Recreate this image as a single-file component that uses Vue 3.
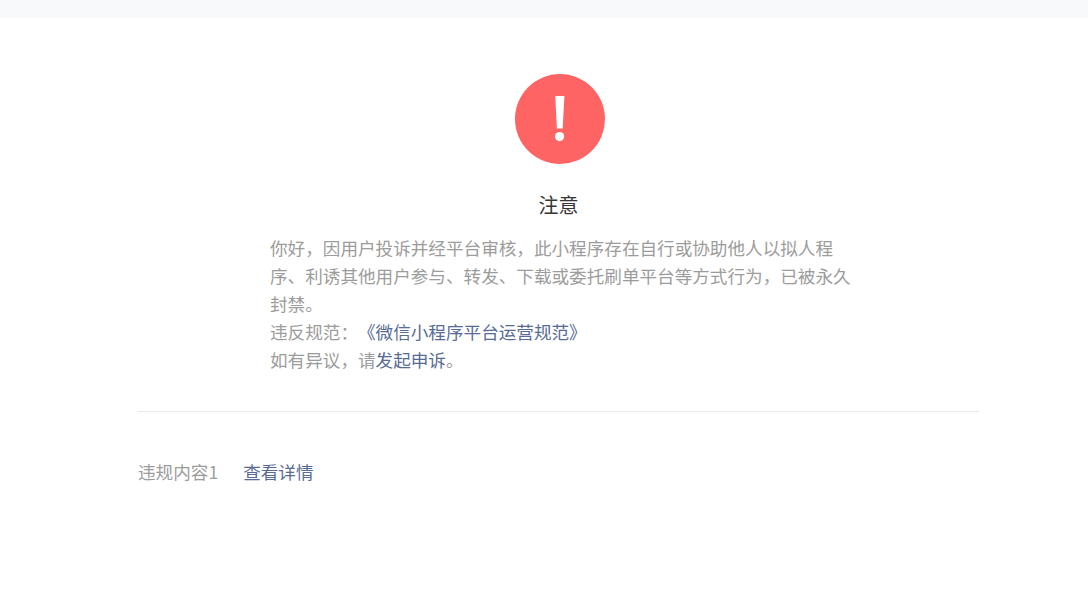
<template>
  <div class="page">
    <div class="top-band"></div>
    <main class="content">
      <section class="notice">
        <svg class="warn-icon" width="90" height="90" viewBox="0 0 90 90">
          <circle cx="45" cy="45" r="45" fill="#ff6464"></circle>
          <path d="M40.2 22h9.2l-1.7 32.5h-5.8z" fill="#fff"></path>
          <circle cx="44.6" cy="62.6" r="4.6" fill="#fff"></circle>
        </svg>
        <h2 class="notice-title">注意</h2>
        <div class="notice-body">
          <p class="body-line">你好，因用户投诉并经平台审核，此小程序存在自行或协助他人以拟人程序、利诱其他用户参与、转发、下载或委托刷单平台等方式行为，已被永久封禁。</p>
          <p class="body-line">违反规范：<a class="link">《微信小程序平台运营规范》</a></p>
          <p class="body-line">如有异议，请<a class="link">发起申诉</a>。</p>
        </div>
      </section>
      <div class="violation">
        <span class="violation-label">违规内容1</span>
        <a class="link">查看详情</a>
      </div>
    </main>
  </div>
</template>

<script setup>
</script>

<style>
body {
  background: #fff;
}
</style>

<style scoped>
.page {
  height: 615px;
  overflow: hidden;
  background: #fff;
  font-family: "Noto Sans CJK SC", "Liberation Sans", sans-serif;
  font-size: 17.6px;
  color: #9c9c9c;
  text-spacing-trim: space-all;
}

.top-band {
  height: 18px;
  background: #f8f9fb;
}

.content {
  width: 841px;
  margin-left: 138px;
}

.notice {
  display: flex;
  flex-direction: column;
  align-items: center;
  padding-top: 56px;
  padding-bottom: 37px;
  border-bottom: 1px solid #e9e9e9;
}

.warn-icon {
  display: block;
  margin-left: 3px;
}

.notice-title {
  margin: 27px 0 0;
  font-size: 20px;
  font-weight: 400;
  line-height: 28px;
  color: #353535;
}

.notice-body {
  width: 586px;
  margin-top: 15px;
  margin-left: 9px;
  line-height: 28px;
}

.body-line {
  margin: 0;
}

.link {
  color: #576b95;
}

.violation {
  display: flex;
  gap: 25px;
  margin-top: 46px;
  line-height: 28px;
}
</style>
